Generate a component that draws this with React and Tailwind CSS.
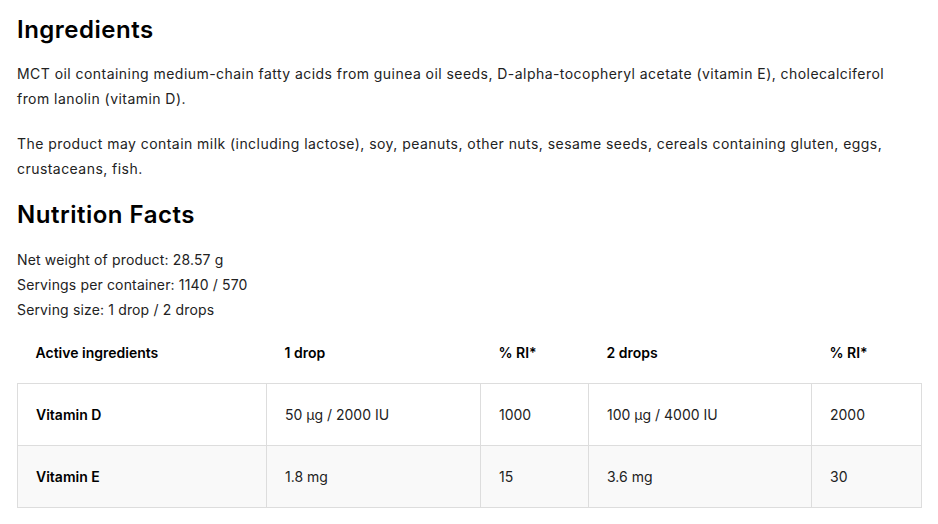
import React from 'react'

const rows = [
  { name: 'Vitamin D', one: '50 µg / 2000 IU', ri1: '1000', two: '100 µg / 4000 IU', ri2: '2000' },
  { name: 'Vitamin E', one: '1.8 mg', ri1: '15', two: '3.6 mg', ri2: '30' },
]

export default function App() {
  return (
    <div className="min-h-[524px] bg-white px-[17px] pt-[12px] text-[14px] text-[#222] font-['Inter','Noto_Sans',sans-serif]">
      {/* Ingredients */}
      <h2 className="text-[24px] leading-[36px] font-semibold tracking-[0.5px] text-black">Ingredients</h2>
      <p className="mt-[13px] leading-[25px] tracking-[0.45px]">
        MCT oil containing medium-chain fatty acids from guinea oil seeds, D-alpha-tocopheryl acetate (vitamin E), cholecalciferol from lanolin (vitamin D).
      </p>
      <p className="mt-[20px] leading-[25px] tracking-[0.45px]">
        The product may contain milk (including lactose), soy, peanuts, other nuts, sesame seeds, cereals containing gluten, eggs, crustaceans, fish.
      </p>

      {/* Nutrition facts */}
      <h2 className="mt-[16px] text-[24px] leading-[36px] font-semibold tracking-[0.5px] text-black">Nutrition Facts</h2>
      <div className="mt-[14px] leading-[25px] tracking-[0.15px]">
        <p>Net weight of product: 28.57 g</p>
        <p>Servings per container: 1140 / 570</p>
        <p>Serving size: 1 drop / 2 drops</p>
      </div>

      <table className="w-[904px] table-fixed border-collapse">
        <colgroup>
          <col className="w-[249px]" />
          <col className="w-[214px]" />
          <col className="w-[108px]" />
          <col className="w-[223px]" />
          <col className="w-[110px]" />
        </colgroup>
        <thead>
          <tr className="h-[61px] text-left text-black">
            <th className="px-[18px] font-semibold">Active ingredients</th>
            <th className="px-[18px] font-semibold">1 drop</th>
            <th className="px-[18px] font-semibold">% RI*</th>
            <th className="px-[18px] font-semibold">2 drops</th>
            <th className="px-[18px] font-semibold">% RI*</th>
          </tr>
        </thead>
        <tbody>
          {rows.map((r, i) => (
            <tr key={r.name} className={i % 2 === 1 ? 'h-[62px] bg-[#f9f9f9]' : 'h-[62px]'}>
              <td className="border border-[#dddddd] px-[18px] font-semibold text-black">{r.name}</td>
              <td className="border border-[#dddddd] px-[18px]">{r.one}</td>
              <td className="border border-[#dddddd] px-[18px]">{r.ri1}</td>
              <td className="border border-[#dddddd] px-[18px]">{r.two}</td>
              <td className="border border-[#dddddd] px-[18px]">{r.ri2}</td>
            </tr>
          ))}
        </tbody>
      </table>
    </div>
  )
}
